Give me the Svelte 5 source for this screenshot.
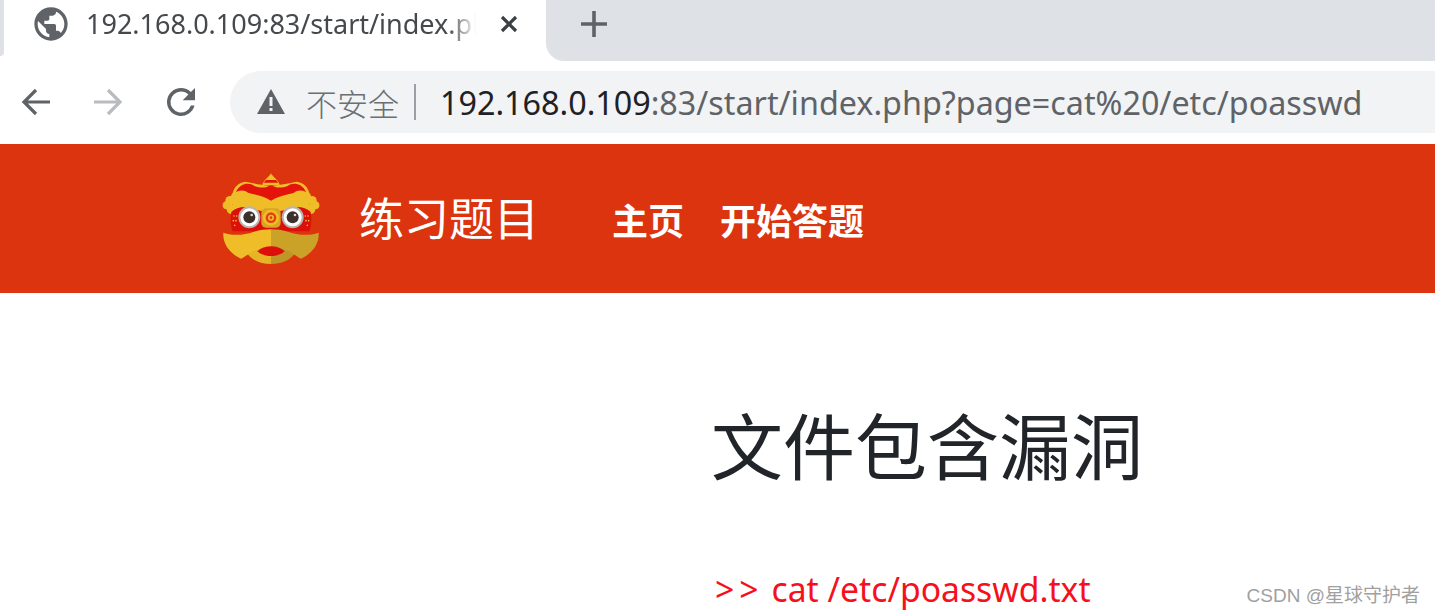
<script>
	let title = '文件包含漏洞';
	let links = ['主页', '开始答题'];
</script>

<div class="page">
	<div class="tabstrip">
		<div class="sliver"></div>
		<div class="tab">
			<svg class="globe" viewBox="0 0 24 24" width="40" height="40"><path fill="#5f6368" d="M12 2C6.48 2 2 6.48 2 12s4.48 10 10 10 10-4.48 10-10S17.52 2 12 2zm-1 17.93c-3.95-.49-7-3.85-7-7.93 0-.62.08-1.21.21-1.79L9 15v1c0 1.1.9 2 2 2v1.93zm6.9-2.54c-.26-.81-1-1.39-1.9-1.39h-1v-3c0-.55-.45-1-1-1H8v-2h2c.55 0 1-.45 1-1V7h2c1.1 0 2-.9 2-2v-.41c2.93 1.19 5 4.06 5 7.41 0 2.08-.8 3.97-2.1 5.39z"/></svg>
			<span class="tab-title">192.168.0.109:83/start/index.php</span>
			<svg class="close" viewBox="0 0 20 20" width="20" height="20"><path d="M3 3l14 14M17 3L3 17" stroke="#3c4043" stroke-width="3.2" fill="none"/></svg>
		</div>
		<div class="strip-rest">
			<svg class="plus" viewBox="0 0 28 28" width="28" height="28"><path d="M14 1v26M1 14h26" stroke="#5f6368" stroke-width="3.6" fill="none"/></svg>
		</div>
	</div>

	<div class="toolbar">
		<svg class="nav-btn" viewBox="0 0 32 32" width="32" height="32"><path d="M30 16H5M16 4L4 16l12 12" stroke="#5f6368" stroke-width="3.2" fill="none"/></svg>
		<svg class="nav-btn" viewBox="0 0 32 32" width="32" height="32"><path d="M2 16h25M16 4l12 12-12 12" stroke="#b9bbbe" stroke-width="3.2" fill="none"/></svg>
		<svg class="reload" viewBox="0 0 24 24" width="42" height="42"><path fill="#5f6368" d="M17.65 6.35A7.96 7.96 0 0 0 12 4a8 8 0 1 0 7.73 10h-2.08A6 6 0 1 1 12 6c1.66 0 3.14.69 4.22 1.78L13 11h7V4l-2.35 2.35z"/></svg>
		<div class="omnibox">
			<svg class="warn" viewBox="0 0 28 26" width="28" height="26"><path fill="#5f6368" d="M14 0L28 25H0z"/><path d="M14 8v9M14 19v3" stroke="#f1f3f4" stroke-width="3"/></svg>
			<span class="insecure">不安全</span>
			<span class="divider"></span>
			<span class="url"><span class="host">192.168.0.109</span>:83/start/index.php?page=cat%20/etc/poasswd</span>
		</div>
	</div>

	<header class="site-header">
		<svg class="lion" viewBox="0 0 306 294" width="102" height="98">
			<defs>
				<g id="lion-top">
					<path d="M153 48C120 44 100 40 76 35 56 38 42 50 38 70L38 130l115 10z" fill="#efbd27"/>
					<g fill="#efbd27"><circle cx="48" cy="80" r="15"/><circle cx="30" cy="92" r="14"/><circle cx="20" cy="106" r="12"/><circle cx="34" cy="118" r="14"/></g>
					<path d="M153 44c-16 12-32 10-50 4-14-10-40-12-55 18 14-6 26-6 36 2 18 6 44 8 69 24z" fill="#e2140b"/>
					<path d="M153 128l-43-8c-26-14-58-12-76 6-4 20-2 42 4 58h115z" fill="#dc0f0a"/>
					<g fill="#efbd27"><circle cx="42" cy="138" r="2.5"/><circle cx="50" cy="138" r="2.5"/><circle cx="40" cy="152" r="2.5"/><circle cx="48" cy="152" r="2.5"/><circle cx="44" cy="166" r="2.5"/></g>
				</g>
			</defs>
			<use href="#lion-top"/>
			<use href="#lion-top" transform="matrix(-1 0 0 1 306 0)"/>
			<path d="M153 10c6 12 24 20 26 36h-52c2-16 20-24 26-36z" fill="#efbd27"/>
			<path d="M138 30h30l7 8h-44z" fill="#e2140b"/>
			<circle cx="88" cy="142" r="33" fill="#b9b4ae"/>
			<circle cx="88" cy="142" r="27" fill="#fff"/>
			<circle cx="88" cy="142" r="18" fill="#3b302c"/>
			<circle cx="95" cy="135" r="4" fill="#d8d8d8"/>
			<circle cx="218" cy="142" r="33" fill="#b9b4ae"/>
			<circle cx="218" cy="142" r="27" fill="#fff"/>
			<circle cx="218" cy="142" r="18" fill="#3b302c"/>
			<circle cx="225" cy="135" r="4" fill="#d8d8d8"/>
			<rect x="124" y="115" width="58" height="58" rx="14" fill="#d8a524"/>
			<circle cx="153" cy="143" r="24" fill="#efbd27"/>
			<circle cx="153" cy="143" r="16" fill="#e2410f"/>
			<circle cx="153" cy="143" r="9" fill="#efbd27"/>
			<circle cx="153" cy="143" r="4" fill="#e2410f"/>
			<path d="M72 222c2 36 36 60 81 60v-60z" fill="#e6b425"/>
			<path d="M234 222c-2 36-36 60-81 60v-60z" fill="#bf9728"/>
			<path d="M10 188c30 10 62 8 90-2 18-6 36-8 53-8v60c-16 0-36 0-52 4-12 6-24 18-38 24-34-14-56-46-53-78z" fill="#efbd27"/>
			<path d="M296 188c-30 10-62 8-90-2-18-6-36-8-53-8v60c16 0 36 0 52 4 12 6 24 18 38 24 34-14 56-46 53-78z" fill="#c9a227"/>
			<path d="M112 244c10-10 26-15 41-15s31 5 41 15c-10 10-26 14-41 14s-31-4-41-14z" fill="#dc0f0a"/>
		</svg>
		<span class="brand">练习题目</span>
		<nav class="site-nav">
			{#each links as link}
				<span class="nav-link">{link}</span>
			{/each}
		</nav>
	</header>

	<main class="content">
		<h1>{title}</h1>
		<p class="cmd"><span class="prompt">&gt;&gt;</span>cat /etc/poasswd.txt</p>
	</main>

	<div class="watermark">CSDN @星球守护者</div>
</div>

<style>
	:global(body) {
		margin: 0;
		background: #fff;
		overflow: hidden;
	}

	.page {
		position: relative;
		width: 1435px;
		height: 613px;
		overflow: hidden;
		font-family: "Noto Sans", "Noto Sans CJK SC", sans-serif;
	}

	/* browser chrome */
	.tabstrip {
		display: flex;
		height: 61px;
		background: #fff;
	}

	.sliver {
		width: 4px;
		height: 56px;
		background: #dee1e6;
		border-radius: 0 0 4px 0;
	}

	.tab {
		display: flex;
		align-items: center;
		width: 542px;
		padding: 0 0 14px 27px;
		box-sizing: border-box;
	}

	.tab-title {
		width: 394px;
		margin-left: 15px;
		overflow: hidden;
		white-space: nowrap;
		font-size: 27px;
		color: #45484c;
		-webkit-mask-image: linear-gradient(to right, #000 92%, transparent 99%);
		mask-image: linear-gradient(to right, #000 92%, transparent 99%);
	}

	.close {
		margin-left: 19px;
	}

	.strip-rest {
		flex: 1;
		display: flex;
		align-items: center;
		padding: 0 0 14px 34px;
		background: #dee1e6;
		border-radius: 0 0 0 18px;
	}

	.toolbar {
		display: flex;
		align-items: center;
		height: 83px;
		padding-left: 20px;
		box-sizing: border-box;
		background: #fff;
	}

	.nav-btn {
		margin-right: 40px;
		margin-top: -2px;
	}

	.reload {
		margin: -2px 28px 0 -4px;
	}

	.omnibox {
		display: flex;
		align-items: center;
		flex: 1;
		height: 62px;
		margin-top: -1px;
		padding-left: 27px;
		background: #f1f3f4;
		border-radius: 31px 0 0 31px;
	}

	.insecure {
		margin-left: 21px;
		font-size: 31px;
		font-weight: 300;
		color: #6b6e72;
	}

	.divider {
		width: 2px;
		height: 36px;
		margin: 0 24px 0 15px;
		background: #9aa0a6;
	}

	.url {
		font-size: 32.3px;
		color: #5f6368;
		white-space: nowrap;
	}

	.host {
		color: #202124;
	}

	/* site */
	.site-header {
		display: flex;
		align-items: flex-start;
		height: 149px;
		padding: 26px 0 0 220px;
		box-sizing: border-box;
		background: #dc340f;
		color: #fff;
	}

	.brand {
		margin: 17px 0 0 37px;
		font-size: 45px;
		line-height: 64px;
	}

	.site-nav {
		display: flex;
		gap: 36px;
		margin: 24px 0 0 73px;
	}

	.nav-link {
		font-size: 36px;
		line-height: 56px;
		font-weight: 700;
	}

	.content {
		padding: 103px 0 0 711px;
	}

	h1 {
		margin: 0;
		font-size: 72px;
		line-height: 100px;
		font-weight: 400;
		color: #212529;
	}

	.cmd {
		margin: 70px 0 0;
		padding-left: 4px;
		font-size: 33.7px;
		line-height: 46px;
		color: #f5101c;
		white-space: nowrap;
	}

	.prompt {
		margin-right: 8px;
		letter-spacing: 5px;
	}

	.watermark {
		position: absolute;
		right: 15px;
		bottom: 6px;
		font-family: "Liberation Sans", "Noto Sans CJK SC", sans-serif;
		font-size: 19px;
		color: #a0a0a0;
		white-space: nowrap;
	}
</style>
